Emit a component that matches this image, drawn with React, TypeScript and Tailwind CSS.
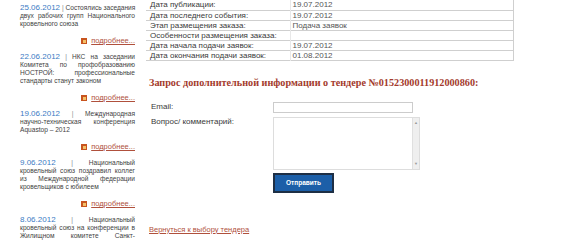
import React from "react";

const news: { date: string; first: string; lines: string[] }[] = [
  { date: "25.06.2012", first: "Состоялись заседания", lines: ["двух рабочих групп Национального", "кровельного союза"] },
  { date: "22.06.2012", first: "НКС на заседании", lines: ["Комитета по профобразованию", "НОСТРОЙ: профессиональные", "стандарты станут законом"] },
  { date: "19.06.2012", first: "Международная", lines: ["научно-техническая конференция", "Aquastop – 2012"] },
  { date: "9.06.2012", first: "Национальный", lines: ["кровельный союз поздравил коллег", "из Международной федерации", "кровельщиков с юбилеем"] },
  { date: "8.06.2012", first: "Национальный", lines: ["кровельный союз на конференции в", "Жилищном комитете Санкт-", "Петербурга"] },
];

const rows: [string, string][] = [
  ["Дата публикации:", "19.07.2012"],
  ["Дата последнего события:", "19.07.2012"],
  ["Этап размещения заказа:", "Подача заявок"],
  ["Особенности размещения заказа:", ""],
  ["Дата начала подачи заявок:", "19.07.2012"],
  ["Дата окончания подачи заявок:", "01.08.2012"],
];

function MoreIcon() {
  return (
    <span className="inline-flex w-[6px] h-[6px] bg-[#c8541e] items-center justify-center mr-[4px]">
      <span className="block w-[3px] h-[3px] bg-[#f3c068]" />
    </span>
  );
}

function Line({ children, last }: { children: React.ReactNode; last?: boolean }) {
  return (
    <div
      className={
        last
          ? "whitespace-nowrap text-left"
          : "whitespace-nowrap text-justify [text-align-last:justify]"
      }
    >
      {children}
    </div>
  );
}

export default function App() {
  return (
    <div className="w-[565px] h-[240px] overflow-hidden bg-white flex" style={{ fontFamily: '"Liberation Sans", Arial, sans-serif' }}>
      <div className="w-[115px] ml-[20px] pt-[4px] shrink-0">
        {news.map((n, i) => (
          <div key={i} className="mb-[8px]">
            <div className="text-[6.6px] leading-[8px] text-[#3f3f3f]">
              <Line>
                <span className="text-[8px] text-[#3b7bc4]">{n.date}</span>{" "}
                <span className="text-[#888]">|</span> {n.first}
              </Line>
              {n.lines.map((l, j) => (
                <Line key={j} last={j === n.lines.length - 1}>
                  {l}
                </Line>
              ))}
            </div>
            <div className="flex justify-end items-center mt-[9px] text-[7.5px] leading-[8px]">
              <MoreIcon />
              <span className="underline text-[#b0503c]">подробнее...</span>
            </div>
          </div>
        ))}
      </div>
      <div className="ml-[11px] w-[370px] shrink-0">
        <table className="w-[368px] border-collapse text-[8px] leading-[9px] text-[#444]">
          <tbody>
            {rows.map(([a, b], i) => (
              <tr key={i} className="h-[10px] border-b border-[#cfcfcf]">
                <td className="w-[144px] pl-[4px] p-0 text-[#3a3a3a] border-r border-[#e8e8e8] whitespace-nowrap">{a}</td>
                <td className="pl-[2px] p-0 text-[#555] border-r border-[#cfcfcf]">{b}</td>
              </tr>
            ))}
          </tbody>
        </table>
        <h2
          className="mt-[16px] ml-[3px] text-[10.2px] leading-[12px] font-bold text-[#a33a2c] whitespace-nowrap"
          style={{ fontFamily: '"Liberation Serif", Georgia, serif' }}
        >
          Запрос дополнительной информации о тендере №0152300011912000860:
        </h2>
        <div className="mt-[13px] ml-[5px] grid grid-cols-[122px_1fr] gap-y-[4px] text-[8px] leading-[10px] text-[#3a3a3a]">
          <label>Email:</label>
          <input className="w-[140px] h-[11px] border border-[#ccc] bg-white outline-none" />
          <label>Вопрос/ комментарий:</label>
          <div className="w-[147px] h-[53px] border border-[#ddd] flex">
            <div className="flex-1" />
            <div className="w-[7px] bg-[#efefef] border-l border-[#e0e0e0] flex flex-col justify-between items-center py-[3px] text-[4px] leading-[4px] text-[#999]">
              <span>▲</span>
              <span>▼</span>
            </div>
          </div>
          <div />
          <button className="w-[61px] h-[20px] -mt-[1px] bg-[#1c5fa8] border-2 border-[#1e2f45] text-white text-[6.5px] font-bold">
            Отправить
          </button>
        </div>
        <a className="block mt-[32px] ml-[3px] text-[7.5px] leading-[10px] underline text-[#b0503c]">Вернуться к выбору тендера</a>
      </div>
    </div>
  );
}
